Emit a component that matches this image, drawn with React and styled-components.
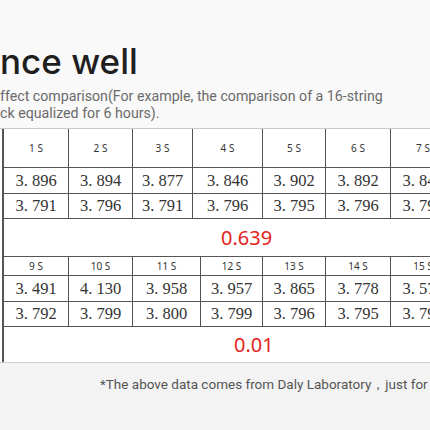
import React from "react";
import styled, { createGlobalStyle } from "styled-components";

const GlobalStyle = createGlobalStyle`
  html, body { margin: 0; padding: 0; }
  body {
    width: 430px;
    height: 430px;
    overflow: hidden;
    background: #f9f9f9;
  }
  * { box-sizing: border-box; }
`;

const Page = styled.div`
  display: flex;
  flex-direction: column;
  width: 430px;
  height: 430px;
  overflow: hidden;
`;

const Header = styled.header`
  height: 128px;
  padding-top: 41px;
  background: #f9f9f9;
  white-space: nowrap;
`;

const Title = styled.h1`
  margin: 0;
  font-family: Inter, "Noto Sans", sans-serif;
  font-weight: 500;
  font-size: 35px;
  line-height: 40px;
  color: #1f1f1f;
`;

const Subtitle = styled.p`
  margin: 7px 0 0;
  font-family: Roboto, "Noto Sans", sans-serif;
  font-size: 14.2px;
  line-height: 17px;
  color: #6a6a6a;
`;

const Panel = styled.section`
  height: 235px;
  background: #fff;
  border-top: 1px solid #c8c8c8;
  border-bottom: 1px solid #cfcfcf;
  padding-left: 2px;
  display: flex;
  flex-direction: column;
  overflow: hidden;
`;

const Table = styled.div`
  display: grid;
  grid-template-columns: ${(p) => p.$cols};
  border-left: 2px solid #555;
  width: max-content;
`;

const Cell = styled.div`
  height: ${(p) => p.$h}px;
  border-right: 1px solid #555;
  border-bottom: 1px solid #555;
  display: flex;
  align-items: center;
  justify-content: center;
  white-space: nowrap;
  overflow: hidden;
`;

const HeadLabel = styled.span`
  font-family: "Noto Sans", sans-serif;
  font-size: 10px;
  color: #333;
`;

const Value = styled.span`
  font-family: "Liberation Serif", serif;
  font-size: 16.5px;
  color: #333;
`;

const SpanCell = styled.div`
  grid-column: 1 / -1;
  height: ${(p) => p.$h}px;
  border-bottom: ${(p) => (p.$last ? "none" : "1px solid #555")};
  display: flex;
  align-items: center;
  padding-left: ${(p) => p.$pad}px;
`;

const Diff = styled.span`
  font-family: "Noto Sans", sans-serif;
  font-size: 20px;
  color: #e3231b;
`;

const Footer = styled.footer`
  flex: 1;
  background: #f3f3f3;
  padding: 13px 0 0 100px;
  font-family: Roboto, "Noto Sans", sans-serif;
  font-size: 13.5px;
  color: #555;
  white-space: nowrap;
`;

const t1 = {
  cols: "65px 64px 60px 70px 63px 65px 65px",
  head: ["1 S", "2 S", "3 S", "4 S", "5 S", "6 S", "7 S"],
  r1: ["3. 896", "3. 894", "3. 877", "3. 846", "3. 902", "3. 892", "3. 847"],
  r2: ["3. 791", "3. 796", "3. 791", "3. 796", "3. 795", "3. 796", "3. 793"],
  diff: "0.639",
};

const t2 = {
  cols: "65px 64px 68px 62px 63px 65px 65px",
  head: ["9 S", "10 S", "11 S", "12 S", "13 S", "14 S", "15 S"],
  r1: ["3. 491", "4. 130", "3. 958", "3. 957", "3. 865", "3. 778", "3. 572"],
  r2: ["3. 792", "3. 799", "3. 800", "3. 799", "3. 796", "3. 795", "3. 794"],
  diff: "0.01",
};

function DataTable({ data, headH, spanH, last, pad }) {
  return (
    <Table $cols={data.cols}>
      {data.head.map((h) => (
        <Cell key={"h" + h} $h={headH}>
          <HeadLabel>{h}</HeadLabel>
        </Cell>
      ))}
      {data.r1.map((v, i) => (
        <Cell key={"a" + i} $h={26}>
          <Value>{v}</Value>
        </Cell>
      ))}
      {data.r2.map((v, i) => (
        <Cell key={"b" + i} $h={25}>
          <Value>{v}</Value>
        </Cell>
      ))}
      <SpanCell $h={spanH} $last={last} $pad={pad}>
        <Diff>{data.diff}</Diff>
      </SpanCell>
    </Table>
  );
}

export default function App() {
  return (
    <>
      <GlobalStyle />
      <Page>
        <Header>
          <Title>nce well</Title>
          <Subtitle>
            ffect comparison(For example, the comparison of a 16-string
            <br />
            ck equalized for 6 hours).
          </Subtitle>
        </Header>
        <Panel>
          <DataTable data={t1} headH={39} spanH={38} pad={217} />
          <DataTable data={t2} headH={19} spanH={35} last pad={230} />
        </Panel>
        <Footer>*The above data comes from Daly Laboratory，just for</Footer>
      </Page>
    </>
  );
}
